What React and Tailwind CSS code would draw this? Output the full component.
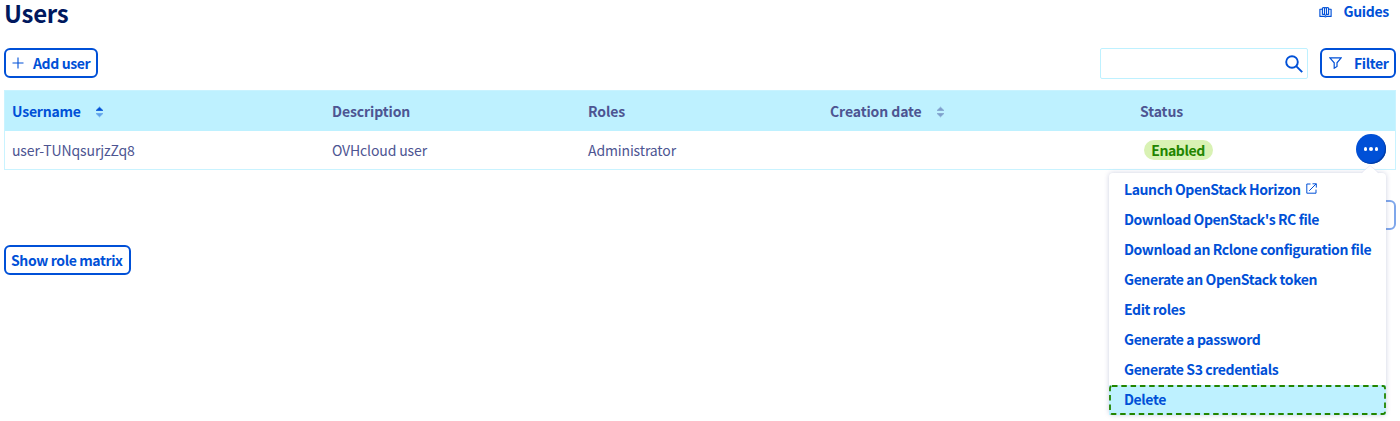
const columns = [
  { label: 'Username', sort: 'active' },
  { label: 'Description' },
  { label: 'Roles' },
  { label: 'Creation date', sort: 'idle' },
  { label: 'Status' },
];

const actions = [
  'Launch OpenStack Horizon',
  "Download OpenStack's RC file",
  'Download an Rclone configuration file',
  'Generate an OpenStack token',
  'Edit roles',
  'Generate a password',
  'Generate S3 credentials',
  'Delete',
];

const outlined =
  'flex h-[30px] shrink-0 items-center rounded-[6px] border-2 border-[#0050d7] bg-white text-[14px] leading-[26px] font-bold tracking-[-0.38px] whitespace-nowrap text-[#0050d7]';

function SortIcon({ active }) {
  return (
    <svg className="mt-[1px] ml-[14px] h-[12px] w-[9px]" viewBox="0 0 9 12" strokeLinejoin="round" strokeWidth="0.8">
      <path
        d="M1.2 4.4 4.5 1.2l3.3 3.2z"
        className={active ? 'fill-[#0050d7] stroke-[#0050d7]' : 'fill-[#7f9fcc] stroke-[#7f9fcc]'}
      />
      <path
        d="M1.2 7.6h6.6L4.5 10.8z"
        className={active ? 'fill-[#5fa1eb] stroke-[#5fa1eb]' : 'fill-[#7f9fcc] stroke-[#7f9fcc]'}
      />
    </svg>
  );
}

function ActionMenu() {
  return (
    <div className="absolute top-[39px] right-0 z-10 w-[277px] rounded-[4px] bg-white pt-[1px] shadow-[0_0_5px_rgba(77,85,146,0.28)]">
      <svg className="absolute -top-[8px] right-[6px] h-[9px] w-[20px]" viewBox="0 0 20 9">
        <path d="M1 9 10 0.5 19 9z" fill="#fff" />
        <path d="M1 8 10 0.5 19 8" fill="none" stroke="#e6e7f3" strokeWidth="0.7" />
      </svg>
      {actions.map((label, i) => (
        <div
          key={label}
          className={
            i === actions.length - 1
              ? 'relative flex h-[30.14px] items-center bg-[#bef1ff] pb-[1px] pl-[15px]'
              : 'flex h-[30.14px] items-center pb-[1px] pl-[15px]'
          }
        >
          <span className="text-[14px] leading-[20px] font-bold tracking-[-0.4px] whitespace-nowrap text-[#0050d7]">
            {label}
          </span>
          {i === 0 && (
            <svg className="ml-[5px] h-[11px] w-[11px]" viewBox="0 0 11 11" fill="none" stroke="#0050d7">
              <path d="M4.5 1H0.8v9.2H10V6.6M6.5 0.8h3.8v3.8M10.2 0.8 3.2 7.8" />
            </svg>
          )}
          {i === actions.length - 1 && (
            <svg className="absolute top-0 left-0 h-[30px] w-[277px]" viewBox="0 0 277 30" fill="none">
              <rect x="1" y="1" width="275" height="28" rx="2" stroke="#228500" strokeWidth="1.8" strokeDasharray="5.5 3.8" />
            </svg>
          )}
        </div>
      ))}
    </div>
  );
}

export default function App() {
  return (
    <main className="h-[421px] overflow-hidden bg-white px-[4px] font-['Noto_Sans_CJK_SC','Noto_Sans',sans-serif] text-[14px] text-[#4d5592]">
      <header className="flex h-[48px] items-start justify-between">
        <h1 className="text-[24px] leading-[26px] font-bold tracking-[-0.25px] text-[#00185e]">Users</h1>
        <a className="mr-[7px] flex h-[23px] items-center text-[14px] leading-[23px] font-bold tracking-[-0.3px] text-[#0050d7]">
          <svg
            className="mr-[12px] h-[12px] w-[13px]"
            viewBox="0 0 13 12"
            fill="none"
            stroke="#0050d7"
            strokeWidth="1.15"
            strokeLinejoin="round"
          >
            <path d="M3.4 3.2H0.9v7.2h4.4q1.2.9 2.4 0h4.4V3.2H9.6" />
            <path d="M3.4 8.8V2.2q1.4-1.4 2.1 0v6.2M5.5 2.2q1-1.2 2 0v6.2M7.5 2.2q1-1.4 2.1 0v6.6M3.4 8.8q1-.8 2.1-.2l1 .8 1-.8q1.1-.6 2.1.2" />
          </svg>
          Guides
        </a>
      </header>

      <div className="flex h-[42px] items-start justify-between">
        <button className={`${outlined} w-[94px] pl-[6px]`}>
          <svg className="mr-[9px] h-[12px] w-[12px]" viewBox="0 0 12 12" stroke="#0050d7" strokeWidth="1.1">
            <path d="M6 0.5v11M0.5 6h11" />
          </svg>
          Add user
        </button>
        <div className="flex items-start gap-[12px]">
          <div className="flex h-[31px] w-[208px] items-center justify-end rounded-[2px] border border-[#bef1ff] pr-[4px]">
            <svg className="h-[18px] w-[18px]" viewBox="0 0 18 18" fill="none" stroke="#0050d7" strokeWidth="1.9">
              <circle cx="7" cy="7" r="5.8" />
              <path d="m11.2 11.2 6 6" />
            </svg>
          </div>
          <button className={`${outlined} w-[76px] pl-[7px]`}>
            <svg className="mr-[12px] h-[12px] w-[13px]" viewBox="0 0 13 12" fill="none" stroke="#0050d7" strokeWidth="1.2">
              <path d="M0.8 0.8h11.4L8 5.8v3.7L5.2 11.2V5.8z" />
            </svg>
            Filter
          </button>
        </div>
      </div>

      <section className="h-[80px] border border-[#c9f3ff]">
        <div className="grid h-[40px] grid-cols-[320px_256px_242px_310px_1fr] bg-[#bef1ff]">
          {columns.map((c) => (
            <div
              key={c.label}
              className={
                c.sort === 'active'
                  ? 'flex items-center pl-[7px] leading-[20px] font-bold tracking-[-0.2px] text-[#0050d7]'
                  : 'flex items-center pl-[7px] leading-[20px] font-bold tracking-[-0.1px]'
              }
            >
              {c.label}
              {c.sort && <SortIcon active={c.sort === 'active'} />}
            </div>
          ))}
        </div>
        <div className="grid h-[38px] grid-cols-[320px_256px_242px_310px_1fr] items-center leading-[20px] tracking-[-0.13px]">
          <div className="pl-[7px]">user-TUNqsurjzZq8</div>
          <div className="pl-[7px]">OVHcloud user</div>
          <div className="pl-[7px]">Administrator</div>
          <div />
          <div className="flex items-center justify-between pr-[9px] pl-[11px]">
            <span className="h-[20px] w-[69px] rounded-full bg-[#d9f2b4] pr-[1px] text-center leading-[20px] font-bold tracking-[-0.4px] text-[#228500]">
              Enabled
            </span>
            <div className="relative -mt-[2px]">
              <button className="flex h-[30px] w-[30px] items-center justify-center gap-[2px] rounded-full bg-[#0050d7] shadow-[inset_-1px_-1px_1px_#003aa0]">
                <i className="h-[3.6px] w-[3.6px] rounded-full bg-white" />
                <i className="h-[3.6px] w-[3.6px] rounded-full bg-white" />
                <i className="h-[3.6px] w-[3.6px] rounded-full bg-white" />
              </button>
              <ActionMenu />
            </div>
          </div>
        </div>
      </section>

      <div className="flex h-[75px] justify-end pt-[30px]">
        <div className="h-[30px] w-[50px] rounded-[6px] border-2 border-[#7fa7eb]" />
      </div>

      <button className={`${outlined} w-[127px] pl-[5px]`}>Show role matrix</button>
    </main>
  );
}
